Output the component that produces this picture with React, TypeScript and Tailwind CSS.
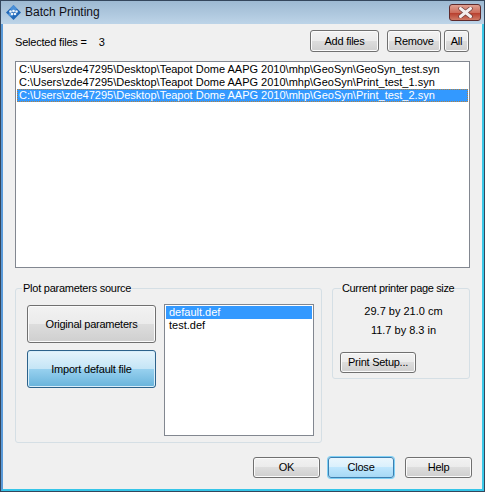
const rows = [
  "C:\\Users\\zde47295\\Desktop\\Teapot Dome AAPG 2010\\mhp\\GeoSyn\\GeoSyn_test.syn",
  "C:\\Users\\zde47295\\Desktop\\Teapot Dome AAPG 2010\\mhp\\GeoSyn\\Print_test_1.syn",
  "C:\\Users\\zde47295\\Desktop\\Teapot Dome AAPG 2010\\mhp\\GeoSyn\\Print_test_2.syn",
];

const greyBtn =
  "flex items-center justify-center shrink-0 rounded-[3px] border border-[#707070] text-black tracking-[-0.25px] bg-[linear-gradient(#f2f2f2_0%,#ebebeb_50%,#dddddd_50%,#cfcfcf_100%)] shadow-[inset_0_0_0_1px_#fbfbfb]";

function Logo() {
  return (
    <svg width="17" height="17" viewBox="0 0 17 17">
      <path d="M8.5 1l7.5 7.5-7.5 7.5L1 8.5z" fill="#2168b8" />
      <path d="M8.5 1l3.7 3.7-3.7 3.8-3.7-3.8zM4.7 8.5l3.8 3.8-3.8 0-1.9-1.9z" fill="#4a90d8" />
      <circle cx="5.5" cy="7.5" r="1.3" fill="#eef5fc" />
      <circle cx="8.5" cy="7" r="1.3" fill="#eef5fc" />
      <circle cx="11.5" cy="7.5" r="1.3" fill="#eef5fc" />
      <circle cx="7" cy="10" r="1.3" fill="#eef5fc" />
      <circle cx="10" cy="10" r="1.3" fill="#eef5fc" />
    </svg>
  );
}

function CloseX() {
  return (
    <svg width="15" height="11" viewBox="0 0 15 11">
      <path d="M2.5 1.5l10 8M12.5 1.5l-10 8" stroke="#6b3a38" strokeWidth="4.4" strokeLinecap="round" />
      <path d="M2.5 1.5l10 8M12.5 1.5l-10 8" stroke="#f4eeee" strokeWidth="3" strokeLinecap="round" />
    </svg>
  );
}

export default function App() {
  return (
    <div className="w-[485px] h-[492px] overflow-hidden flex flex-col border border-[#34465c] bg-[#a9c4dc] text-[11px] leading-[13px] text-black font-['Liberation_Sans',sans-serif]">
      {/* title bar */}
      <div className="h-[23px] shrink-0 flex items-center pl-[4px] pr-[3px] bg-[linear-gradient(#9db9d2,#bdd4e8)]">
        <Logo />
        <span className="ml-[3px] text-[12px] text-[#101018]">Batch Printing</span>
        <div className="ml-auto w-[32px] h-[17px] rounded-[3px] border border-[#5e2a2c] flex items-center justify-center bg-[linear-gradient(#dfa091_0%,#cd6d5c_50%,#b8402f_55%,#cf7a66_100%)]">
          <CloseX />
        </div>
      </div>

      <div className="flex-1 flex flex-col bg-[#f0f0f0] border-l-2 border-l-[#5a9ad8] border-r-2 border-r-[#3cc8e8] border-b-2 border-b-[#35c5e8] pl-[12px] pr-[12px]">
        {/* top row */}
        <div className="h-[37px] shrink-0 flex pt-[6px]">
          <span className="mt-[6px] tracking-[-0.2px]">Selected files =</span>
          <span className="ml-[12px] mt-[6px]">3</span>
          <div className={`${greyBtn} ml-auto w-[69px] h-[22px]`}>Add files</div>
          <div className={`${greyBtn} ml-[8px] w-[54px] h-[22px]`}>Remove</div>
          <div className={`${greyBtn} ml-[3px] w-[25px] h-[22px] mr-[1px]`}>All</div>
        </div>

        {/* file list */}
        <div className="h-[207px] shrink-0 bg-white border border-[#828790] p-[1px]">
          {rows.map((r, i) => (
            <div
              key={r}
              className={`h-[13px] pl-[2px] whitespace-nowrap ${i === 2 ? "bg-[#3399ff] text-white outline-1 outline-dotted outline-[#b5813f] -outline-offset-1" : ""}`}
            >
              {r}
            </div>
          ))}
        </div>

        {/* groups */}
        <div className="mt-[20px] flex gap-[10px]">
          <div className="relative w-[307px] h-[155px] border border-[#d5dfe5] rounded-[3px] flex gap-[8px] pl-[11px] pt-[16px]">
            <span className="absolute left-[6px] -top-[7px] bg-[#f0f0f0] px-[1px] tracking-[-0.25px] whitespace-nowrap">Plot parameters source</span>
            <div className="flex flex-col gap-[7px]">
              <div className={`${greyBtn} w-[129px] h-[38px]`}>Original parameters</div>
              <div className="flex items-center justify-center tracking-[-0.2px] w-[129px] h-[38px] rounded-[3px] border border-[#2c628b] bg-[linear-gradient(#e5f4fc_0%,#c4e5f6_50%,#98d1ef_50%,#68b3db_100%)] shadow-[inset_0_0_0_1px_#d8eefa]">
                Import default file
              </div>
            </div>
            <div className="w-[150px] h-[132px] -mt-[1px] bg-white border border-[#828790] p-[1px]">
              <div className="h-[13px] pl-[3px] bg-[#3399ff] text-white">default.def</div>
              <div className="h-[13px] pl-[3px]">test.def</div>
            </div>
          </div>

          <div className="relative w-[138px] h-[91px] border border-[#d5dfe5] rounded-[3px] flex flex-col">
            <span className="absolute left-[8px] -top-[7px] bg-[#f0f0f0] px-[1px] tracking-[-0.35px] whitespace-nowrap">Current printer page size</span>
            <div className="mt-[16px] pl-[5px] text-center">29.7 by 21.0 cm</div>
            <div className="mt-[6px] pl-[5px] text-center">11.7 by 8.3 in</div>
            <div className={`${greyBtn} ml-[7px] mt-[15px] w-[76px] h-[21px]`}>Print Setup...</div>
          </div>
        </div>

        {/* bottom buttons */}
        <div className="mt-[14px] -mr-[2px] flex justify-end">
          <div className={`${greyBtn} w-[67px] h-[21px]`}>OK</div>
          <div className="ml-[8px] shrink-0 flex items-center justify-center w-[66px] h-[21px] rounded-[3px] border border-[#3c7fb1] tracking-[-0.2px] bg-[linear-gradient(#eaf6fd_0%,#d9f0fc_50%,#bee6fd_50%,#a7d9f5_100%)] shadow-[0_0_0_1px_#7fd0f5]">
            Close
          </div>
          <div className={`${greyBtn} ml-[11px] w-[67px] h-[21px]`}>Help</div>
        </div>
      </div>
    </div>
  );
}
